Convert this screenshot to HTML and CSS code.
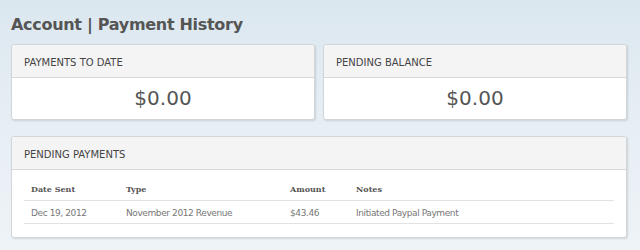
FILE: index.html
```html
<!DOCTYPE html>
<html>
<head>
<meta charset="utf-8">
<link rel="stylesheet" href="styles.css">
</head>
<body>
<div class="page">
  <h1 class="title">Account | Payment History</h1>
  <div class="stats">
    <div class="card">
      <div class="card-head">PAYMENTS TO DATE</div>
      <div class="card-body amount">$0.00</div>
    </div>
    <div class="card">
      <div class="card-head">PENDING BALANCE</div>
      <div class="card-body amount">$0.00</div>
    </div>
  </div>
  <div class="card wide">
    <div class="card-head">PENDING PAYMENTS</div>
    <div class="card-body table-wrap">
      <table class="payments">
        <colgroup>
          <col class="c-date"><col class="c-type"><col class="c-amt"><col>
        </colgroup>
        <thead>
          <tr><th>Date Sent</th><th>Type</th><th>Amount</th><th>Notes</th></tr>
        </thead>
        <tbody>
          <tr><td>Dec 19, 2012</td><td>November 2012 Revenue</td><td>$43.46</td><td>Initiated Paypal Payment</td></tr>
        </tbody>
      </table>
    </div>
  </div>
</div>
</body>
</html>
```
FILE: styles.css
```css
html, body {
  margin: 0;
  padding: 0;
}
body {
  width: 640px;
  height: 250px;
  background: linear-gradient(to bottom, #dbe7ef 0%, #e6eef4 45%, #eef3f7 100%);
  font-family: "DejaVu Sans", Verdana, sans-serif;
  color: #555;
  overflow: hidden;
}
.page {
  padding: 0 13px 0 11px;
}
.title {
  margin: 0;
  padding-top: 14px;
  height: 30px;
  font-size: 16px;
  font-weight: bold;
  color: #555;
  line-height: 22px;
  letter-spacing: -0.3px;
}
.stats {
  display: flex;
  gap: 8px;
}
.card {
  background: #fff;
  border: 1px solid #d2d6d9;
  border-radius: 3px;
  box-shadow: 1px 1px 2px rgba(0,0,0,0.12);
  box-sizing: border-box;
}
.stats .card {
  flex: 1;
  height: 76px;
}
.card-head {
  height: 33px;
  box-sizing: border-box;
  background: #f4f4f4;
  border-bottom: 1px solid #d9d9d9;
  border-radius: 3px 3px 0 0;
  padding: 11px 0 0 12px;
  font-size: 10px;
  line-height: 14px;
  color: #444;
}
.amount {
  text-align: center;
  font-size: 20px;
  line-height: 24px;
  padding-top: 8px;
  color: #555;
}
.wide {
  margin-top: 16px;
  height: 102px;
}
.wide .card-head {
  padding-top: 11px;
}
.table-wrap {
  padding: 8px 12px 0 12px;
}
.payments {
  width: 100%;
  border-collapse: collapse;
  table-layout: fixed;
}
.c-date { width: 95px; }
.c-type { width: 164px; }
.c-amt { width: 66px; }
.payments th,
.payments td {
  text-align: left;
  padding: 6px 0 6px 7px;
  line-height: 10px;
  border-bottom: 1px solid #e2e2e2;
  white-space: nowrap;
}
.payments th {
  font-weight: bold;
  color: #555;
  font-family: "DejaVu Serif", Georgia, serif;
  font-size: 8px;
}
.payments td {
  color: #777;
  font-size: 9px;
  letter-spacing: -0.4px;
  padding-top: 7px;
  padding-bottom: 5px;
}
```
